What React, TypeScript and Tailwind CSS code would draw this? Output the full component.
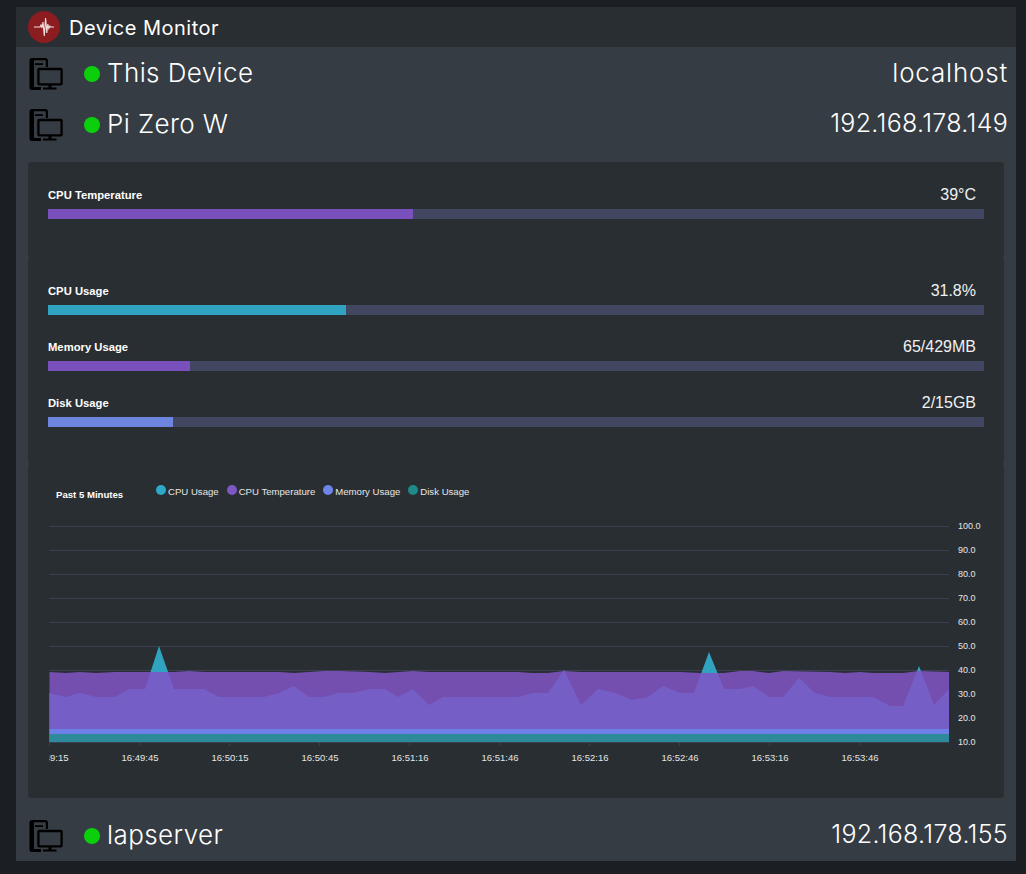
import { Fragment } from "react";

const sans = "font-['Liberation_Sans',Arial,sans-serif]";
const wide = "font-['Inter','Noto_Sans',sans-serif]";

const cpu = [
  [49.5, 693], [66, 697], [80, 693], [96, 697], [115, 697], [130, 689], [145, 689], [159, 646], [174, 689], [204, 689],
  [219, 697], [264, 697], [279, 693], [294, 686], [309, 697], [324, 697], [338, 693], [353, 693], [370, 689], [385, 689],
  [398, 697], [413, 689], [429, 705], [443, 697], [518, 697], [532, 693], [548, 693], [564, 670], [581, 705], [598, 689],
  [615, 693], [632, 700], [648, 697], [663, 686], [680, 693], [694, 693], [709, 652], [724, 689], [740, 689], [753, 686],
  [769, 697], [783, 697], [799, 678], [815, 693], [830, 697], [873, 697], [890, 706], [903, 706], [919, 666], [934, 705],
  [949, 689],
];

const temp = [
  [49.5, 672], [66, 673], [80, 672], [96, 673], [115, 672], [174, 672], [189, 671], [204, 672], [279, 672], [294, 673],
  [324, 671], [340, 671], [370, 672], [385, 673], [413, 671], [429, 672], [518, 672], [532, 673], [548, 673], [564, 671],
  [581, 672], [680, 672], [700, 673], [724, 673], [740, 671], [753, 671], [769, 673], [783, 671], [830, 672], [845, 673],
  [860, 672], [873, 673], [903, 673], [919, 671], [949, 672],
];

const area = (pts: number[][]) =>
  `M49.5,742 ` + pts.map((p) => `L${p[0]},${p[1]}`).join(" ") + ` L949,742 Z`;

const yLabels = ["100.0", "90.0", "80.0", "70.0", "60.0", "50.0", "40.0", "30.0", "20.0", "10.0"];
const xLabels = [
  [50, "16:49:15"], [140, "16:49:45"], [230, "16:50:15"], [320, "16:50:45"], [410, "16:51:16"],
  [500, "16:51:46"], [590, "16:52:16"], [680, "16:52:46"], [770, "16:53:16"], [860, "16:53:46"],
] as const;

const legend = [
  ["CPU Usage", "bg-[#2fa9c9]"],
  ["CPU Temperature", "bg-[#7e57c2]"],
  ["Memory Usage", "bg-[#6e85ec]"],
  ["Disk Usage", "bg-[#1f8a8a]"],
];

function DeviceIcon() {
  return (
    <svg width="34" height="34" viewBox="0 0 34 34" className="shrink-0">
      {/* phone behind the monitor */}
      <path
        d="M3 1 H16 a3 3 0 0 1 3 3 V10 H16.8 V3.2 H5 V30 H12 V33 H3 a2.5 2.5 0 0 1-2.5-2.5 V3.5 A2.5 2.5 0 0 1 3 1 Z"
        fill="#000"
      />
      <path d="M6 6.2 h8 v1.8 h-8 z" fill="#000" />
      <rect x="9.4" y="12" width="23.2" height="15.4" rx="0.8" fill="none" stroke="#000" strokeWidth="2.3" />
      <path d="M19.5 28 h3 v2.6 h5 v2 h-13.5 v-2 h5.5 z" fill="#000" />
    </svg>
  );
}

function DeviceRow({ name, host, hostClass }: { name: string; host: string; hostClass: string }) {
  return (
    <div className="flex items-center h-[51px] pl-[13px] pr-[8px]">
      <DeviceIcon />
      <span className="ml-[21px] w-4 h-4 rounded-full bg-[#0ccf0c] shrink-0" />
      <span className={`ml-[7px] pb-[2px] text-[26px] font-light text-white tracking-[0.4px] ${wide}`}>{name}</span>
      <span className={`ml-auto pb-[2px] font-light text-white ${hostClass} ${wide}`}>{host}</span>
    </div>
  );
}

function Meter({ label, value, pct, color }: { label: string; value: string; pct: string; color: string }) {
  return (
    <div>
      <div className="flex items-end justify-between h-[25px] pr-2 mb-[4px]">
        <span className="text-[11.25px] font-bold text-white leading-[16px] pb-[2px]">{label}</span>
        <span className="text-base text-[#f1f1f1] leading-[20px]">{value}</span>
      </div>
      <div className="h-[10px] bg-[#414760]">
        <div className={`h-full ${color} ${pct}`} />
      </div>
    </div>
  );
}

function Chart() {
  return (
    <svg width="976" height="334" viewBox="28 464 976 334" className="block">
      <defs>
        <clipPath id="plotLabels">
          <rect x="49" y="745" width="920" height="25" />
        </clipPath>
        <clipPath id="underTemp">
          <path d={area(temp)} />
        </clipPath>
      </defs>
      {yLabels.map((t, i) => (
        <Fragment key={t}>
          {i < 9 && <line x1="49" x2="949" y1={526.5 + i * 24} y2={526.5 + i * 24} stroke="#3a3f52" />}
          <text x="958" y={529 + i * 24} fontSize="9" fill="#e6e6e6" fontFamily="Liberation Sans">{t}</text>
        </Fragment>
      ))}
      <path d={area(cpu)} fill="#2fa3bf" />
      <path d={area(temp)} fill="#744fb0" />
      <path d={area(cpu)} fill="#755fc6" clipPath="url(#underTemp)" />
      <rect x="49.5" y="729" width="899.5" height="5" fill="#6e7fe8" />
      <rect x="49.5" y="734" width="899.5" height="8" fill="#2c8a9a" />
      <line x1="49" x2="949" y1="742.5" y2="742.5" stroke="#3a3f52" />
      {xLabels.map(([x, t]) => (
        <Fragment key={t}>
          <line x1={x - 0.5} x2={x - 0.5} y1="742" y2="746" stroke="#3a3f52" />
          <text x={x} y="761" fontSize="9.5" fill="#e6e6e6" textAnchor="middle" fontFamily="Liberation Sans" clipPath="url(#plotLabels)">{t}</text>
        </Fragment>
      ))}
      <text x="56" y="498" fontSize="9.6" fontWeight="700" fill="#fff" fontFamily="Liberation Sans">Past 5 Minutes</text>
    </svg>
  );
}

export default function App() {
  return (
    <div className="min-h-[874px] bg-[#1b1e23] pl-4 pr-[10px] pt-[7px]">
      <div className="h-[854px] bg-[#363c43] overflow-hidden">
        <div className="flex items-center h-10 bg-[#292e32] pl-3">
          <div className="w-8 h-8 rounded-full bg-[#8b1c1f] flex items-center justify-center">
            <svg width="24" height="22" viewBox="0 0 24 22">
              <path d="M2 11 H8 L9 9 L10 12 L11 6 L12.3 20 L13.6 2 L14.8 17 L15.8 8 L16.8 12.5 L17.8 10 L18.6 11 H22" fill="none" stroke="#f4dede" strokeWidth="1.1" />
            </svg>
          </div>
          <span className={`ml-[9px] pt-[1px] text-[20px] text-white tracking-[0.5px] ${wide}`}>Device Monitor</span>
        </div>

        <div className="pt-[1px]">
          <DeviceRow name="This Device" host="localhost" hostClass="text-[26px] tracking-[0.8px]" />
          <DeviceRow name="Pi Zero W" host="192.168.178.149" hostClass="text-[25px] tracking-[0.3px]" />
        </div>

        <div className={`mx-3 mt-[12px] ${sans}`}>
          <section className="h-24 bg-[#292e32] rounded-[3px] px-5 pt-[18px]">
            <Meter label="CPU Temperature" value="39°C" pct="w-[39%]" color="bg-[#7a50bd]" />
          </section>
          <section className="h-[206px] bg-[#292e32] rounded-[3px] px-5 pt-[18px] flex flex-col gap-[17px]">
            <Meter label="CPU Usage" value="31.8%" pct="w-[31.8%]" color="bg-[#2fa3bf]" />
            <Meter label="Memory Usage" value="65/429MB" pct="w-[15.2%]" color="bg-[#7a50bd]" />
            <Meter label="Disk Usage" value="2/15GB" pct="w-[13.4%]" color="bg-[#6e85e0]" />
          </section>
          <section className="relative h-[334px] bg-[#292e32] rounded-[3px]">
            <Chart />
            <div className="absolute left-[128px] top-[21px] flex gap-[8px]">
              {legend.map(([label, color]) => (
                <div key={label} className="flex items-start gap-[2px]">
                  <span className={`w-[10px] h-[10px] rounded-full ${color}`} />
                  <span className="text-[9.6px] leading-[14px] text-[#e6e6e6]">{label}</span>
                </div>
              ))}
            </div>
          </section>
        </div>

        <div className="mt-[12px]">
          <DeviceRow name="lapserver" host="192.168.178.155" hostClass="text-[25px] tracking-[0.3px]" />
        </div>
      </div>
    </div>
  );
}
